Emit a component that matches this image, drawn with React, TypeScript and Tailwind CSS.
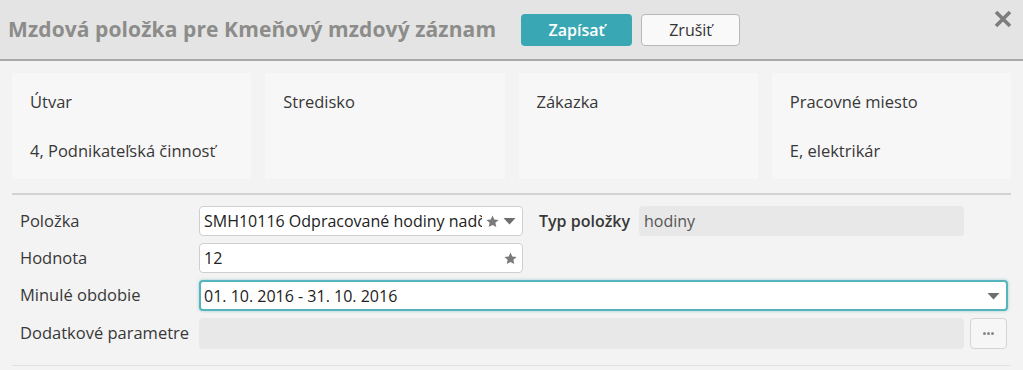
const Star = () => (
  <svg width="15" height="15" viewBox="0 0 24 24" className="shrink-0">
    <path d="M12 2.5l2.9 6.3 6.9.7-5.2 4.6 1.5 6.8L12 17.4l-6.1 3.5 1.5-6.8-5.2-4.6 6.9-.7z" fill="#7a7a7a" />
  </svg>
);

const Caret = () => (
  <svg width="13" height="8" viewBox="0 0 13 8" className="shrink-0">
    <path d="M0.5 1h12L6.5 7.5z" fill="#6e6e6e" />
  </svg>
);

const InfoCard = ({ label, value }: { label: string; value?: string }) => (
  <div className="h-[106px] bg-[#f7f7f7] pl-[18px] flex flex-col">
    <div className="h-[56px] flex items-center pt-[2px]">{label}</div>
    <div className="h-[45px] flex items-center">{value}</div>
  </div>
);

export default function App() {
  return (
    <div className="w-[1023px] h-[370px] bg-[#f3f3f3] text-[16.5px] text-[#383838] overflow-hidden" style={{ fontFamily: '"Open Sans", "Liberation Sans", sans-serif' }}>
      <header className="h-[61px] bg-[#e4e4e4] border-b-2 border-[#a9a9a9] flex items-center pl-2 pr-[10px]">
        <h1 className="text-[21px] font-bold text-[#8c8c8a] pt-[1px] tracking-[0.1px] whitespace-nowrap">Mzdová položka pre Kmeňový mzdový záznam</h1>
        <button className="ml-[25px] w-[111px] h-[32px] rounded-[4px] bg-[#3aa8b4] text-white font-semibold text-[16px]">Zapísať</button>
        <button className="ml-[9px] w-[99px] h-[32px] rounded-[4px] bg-[#f9f9f9] border border-[#b8b8b8] text-[#333] font-medium text-[16px]">Zrušiť</button>
        <div className="ml-auto self-start mt-[10px]">
          <svg width="20" height="18" viewBox="0 0 20 18">
            <path d="M3 2l14 14M17 2L3 16" stroke="#7d7d7d" strokeWidth="3.6" />
          </svg>
        </div>
      </header>

      <div className="px-3">
        <div className="grid grid-cols-4 gap-[14px] pt-3">
          <InfoCard label="Útvar" value="4, Podnikateľská činnosť" />
          <InfoCard label="Stredisko" />
          <InfoCard label="Zákazka" />
          <InfoCard label="Pracovné miesto" value="E, elektrikár" />
        </div>

        <div className="mt-[14px] border-t-2 border-[#d2d2d2]" />

        <div className="pl-2 pt-[11px] flex flex-col gap-[7px]">
          <div className="flex items-center h-[30px]">
            <div className="w-[179px]">Položka</div>
            <div className="w-[324px] h-[30px] bg-white border border-[#cfcfcf] rounded-[4px] flex items-center pl-[4px] pr-[6px] gap-[3px]">
              <span className="text-[16px] text-[#222] flex-1 whitespace-nowrap overflow-hidden">SMH10116 Odpracované hodiny nadčas</span>
              <Star />
              <Caret />
            </div>
            <div className="ml-[16px] w-[100px] text-[16px] font-semibold">Typ položky</div>
            <div className="w-[325px] h-[30px] bg-[#e8e8e8] rounded-[4px] flex items-center pl-[5px] text-[16px] text-[#555]">hodiny</div>
          </div>

          <div className="flex items-center h-[30px]">
            <div className="w-[179px]">Hodnota</div>
            <div className="w-[324px] h-[30px] bg-white border border-[#cfcfcf] rounded-[4px] flex items-center pl-[4px] pr-[4px]">
              <span className="text-[16px] text-[#222] flex-1">12</span>
              <Star />
            </div>
          </div>

          <div className="flex items-center h-[31px]">
            <div className="w-[179px]">Minulé obdobie</div>
            <div className="w-[809px] h-[31px] bg-white border-2 border-[#55b4bd] rounded-[4px] flex items-center pl-[3px] pr-[6px] shadow-[0_0_3px_rgba(60,160,170,0.5)]">
              <span className="text-[16px] text-[#222] flex-1">01. 10. 2016 - 31. 10. 2016</span>
              <Caret />
            </div>
          </div>

          <div className="flex items-center h-[31px]">
            <div className="w-[179px]">Dodatkové parametre</div>
            <div className="w-[765px] h-[31px] bg-[#e8e8e8] rounded-[4px]" />
            <button className="ml-[6px] w-[37px] h-[31px] bg-[#f6f6f6] border border-[#d4d4d4] rounded-[4px] flex items-center justify-center gap-[1px]">
              <span className="w-[3px] h-[3px] rounded-full bg-[#888]" />
              <span className="w-[3px] h-[3px] rounded-full bg-[#888]" />
              <span className="w-[3px] h-[3px] rounded-full bg-[#888]" />
            </button>
          </div>
        </div>

        <div className="mt-[16px] border-t border-[#e2e2e2]" />
      </div>
    </div>
  );
}
